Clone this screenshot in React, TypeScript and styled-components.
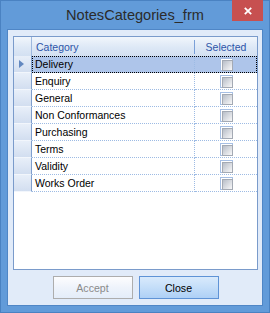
import React from "react";
import styled, { createGlobalStyle } from "styled-components";

const categories = [
  { name: "Delivery", checked: false },
  { name: "Enquiry", checked: false },
  { name: "General", checked: false },
  { name: "Non Conformances", checked: false },
  { name: "Purchasing", checked: false },
  { name: "Terms", checked: false },
  { name: "Validity", checked: false },
  { name: "Works Order", checked: false },
];

const GlobalStyle = createGlobalStyle`
  html, body {
    margin: 0;
    padding: 0;
    background: #629bd9;
  }
  * {
    box-sizing: border-box;
  }
`;

const Window = styled.div`
  width: 270px;
  height: 313px;
  display: flex;
  flex-direction: column;
  padding: 0 7px 7px;
  background: #629bd9;
  box-shadow: inset 0 0 0 1px #4a82c2;
  font-family: "Liberation Sans", Arial, sans-serif;
`;

const TitleBar = styled.div`
  height: 29px;
  display: grid;
  grid-template-columns: 1fr auto 1fr;
  align-items: start;
`;

const Title = styled.div`
  grid-column: 2;
  padding-top: 6px;
  font-family: "Liberation Sans", Arial, sans-serif;
  font-size: 14.6px;
  line-height: 18px;
  color: #2b2b2b;
  white-space: nowrap;
`;

const CloseButton = styled.div`
  grid-column: 3;
  justify-self: end;
  width: 31px;
  height: 21px;
  background: #c75050;
  display: flex;
  align-items: center;
  justify-content: center;
  padding-top: 1px;
`;

const Client = styled.div`
  flex: 1;
  display: flex;
  flex-direction: column;
  border: 1px solid #4f86c6;
  background: #e1ebf9;
  padding: 6px 4px 6px 5px;
`;

const Grid = styled.div`
  flex: 1;
  display: flex;
  flex-direction: column;
  background: #ffffff;
  border: 1px solid #7a9bcb;
  font-size: 10.5px;
`;

const HeaderRow = styled.div`
  height: 19px;
  display: grid;
  grid-template-columns: 18px 163px 62px;
  background: linear-gradient(#f1f6fc, #dde8f6 55%, #d3e0f2);
`;

const Corner = styled.div`
  border-right: 1px solid #9db8de;
`;

const HeaderCell = styled.div<{ $center?: boolean; $divider?: boolean }>`
  display: flex;
  align-items: center;
  justify-content: ${(p) => (p.$center ? "center" : "flex-start")};
  padding-left: ${(p) => (p.$center ? "0" : "4px")};
  color: #2d55a8;
  margin: 3px 0 2px;
  border-right: ${(p) => (p.$divider ? "1px solid #7aa0d8" : "none")};
`;

const Row = styled.div`
  height: 17px;
  display: grid;
  grid-template-columns: 18px 225px;
`;

const RowHeader = styled.div`
  display: flex;
  align-items: center;
  padding-left: 5px;
  background: linear-gradient(#e8eff9, #d2def0);
  border-right: 1px solid #7f9fce;
  border-bottom: 1px solid #f2f6fc;
`;

const RowBody = styled.div<{ $selected?: boolean }>`
  display: grid;
  grid-template-columns: 163px 62px;
  background: ${(p) => (p.$selected ? "#aec5ea" : "#ffffff")};
  outline: ${(p) => (p.$selected ? "1px dotted #000000" : "none")};
  outline-offset: -1px;
`;

const Cell = styled.div`
  display: flex;
  align-items: center;
  padding-left: 3px;
  color: #000000;
  white-space: nowrap;
  border-right: 1px dotted #9dbbe4;
  border-bottom: 1px dotted #9dbbe4;
`;

const CheckCell = styled.div`
  display: flex;
  align-items: center;
  justify-content: center;
  padding-left: 1px;
  border-bottom: 1px dotted #9dbbe4;
`;

const CheckBox = styled.div<{ $checked?: boolean }>`
  width: 13px;
  height: 13px;
  border: 1px solid #a6bfe4;
  background: #ffffff;
  padding: 1px;

  &::after {
    content: "";
    display: block;
    width: 9px;
    height: 9px;
    border: 1px solid #a4aab4;
    background: linear-gradient(135deg, #b8bec8, #f8f8f9);
  }
`;

const ButtonRow = styled.div`
  display: flex;
  justify-content: center;
  gap: 6px;
  margin-top: 6px;
`;

const Button = styled.div<{ $primary?: boolean; $disabled?: boolean }>`
  width: 80px;
  height: 23px;
  display: flex;
  align-items: center;
  justify-content: center;
  font-size: 10.6px;
  color: ${(p) => (p.$disabled ? "#8a8a8a" : "#000000")};
  border: 1px solid ${(p) => (p.$primary ? "#5f93d6" : "#adadad")};
  background: ${(p) =>
    p.$primary
      ? "linear-gradient(#d9eafc, #c6dff9 45%, #aed0f6)"
      : "linear-gradient(#fdfdfe, #eef3fb 50%, #e4edf9)"};
`;

const CurrentArrow = () => (
  <svg width="5" height="8" viewBox="0 0 5 8">
    <polygon points="0,0 5,4 0,8" fill="#6288c0" />
  </svg>
);

export default function App() {
  return (
    <>
      <GlobalStyle />
      <Window>
        <TitleBar>
          <Title>NotesCategories_frm</Title>
          <CloseButton>
            <svg width="8" height="8" viewBox="0 0 8 8">
              <path d="M0.8 0.8 L7.2 7.2 M7.2 0.8 L0.8 7.2" stroke="#ffffff" strokeWidth="1.8" />
            </svg>
          </CloseButton>
        </TitleBar>
        <Client>
          <Grid>
            <HeaderRow>
              <Corner />
              <HeaderCell $divider>Category</HeaderCell>
              <HeaderCell $center>Selected</HeaderCell>
            </HeaderRow>
            {categories.map((c, i) => (
              <Row key={c.name}>
                <RowHeader>{i === 0 && <CurrentArrow />}</RowHeader>
                <RowBody $selected={i === 0}>
                  <Cell>{c.name}</Cell>
                  <CheckCell>
                    <CheckBox $checked={c.checked} />
                  </CheckCell>
                </RowBody>
              </Row>
            ))}
          </Grid>
          <ButtonRow>
            <Button $disabled>Accept</Button>
            <Button $primary>Close</Button>
          </ButtonRow>
        </Client>
      </Window>
    </>
  );
}
